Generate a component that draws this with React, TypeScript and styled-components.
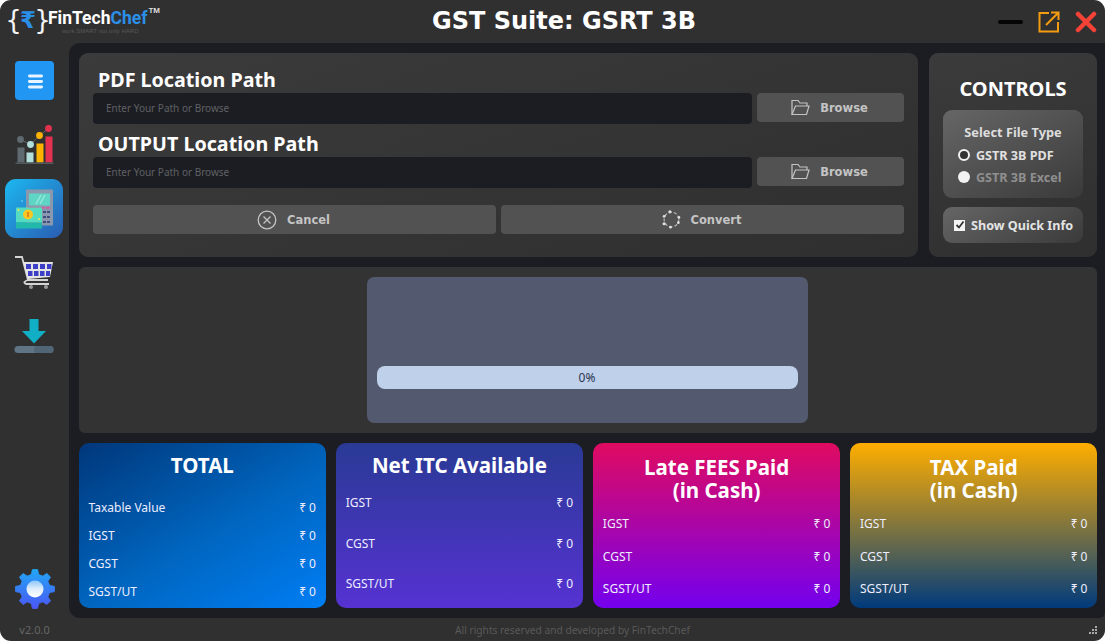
import React from "react";
import styled, { createGlobalStyle } from "styled-components";

const Global = createGlobalStyle`
  html, body { margin: 0; padding: 0; background: #fff; }
  body { font-family: "DejaVu Sans", "Liberation Sans", sans-serif; }
  * { box-sizing: border-box; }
`;

const Window = styled.div`
  width: 1105px; height: 641px; background: #303030; border-radius: 11px;
  display: grid; grid-template-columns: 69px 1fr; grid-template-rows: 43px 575px 23px; overflow: hidden;
`;
const TitleBar = styled.header`
  grid-column: 1 / 3; display: grid; grid-template-columns: 200px 1fr 200px; align-items: center;
`;
const Logo = styled.div`
  display: flex; align-items: flex-start; padding: 7px 0 0 9px; position: relative; height: 43px;
`;
const Brace = styled.span`
  font-family: "DejaVu Sans", sans-serif; font-weight: 400; font-size: 26px; line-height: 26px; color: #f4f4f4; width: 9px; display: flex; justify-content: center;
`;
const Rupee = styled.span`
  font-family: "DejaVu Sans", sans-serif; font-weight: 700; color: #2b8fe8; font-size: 23px; line-height: 26px; width: 20px; display: flex; justify-content: center;
`;
const BrandText = styled.span`
  font-family: "Roboto", sans-serif; font-weight: 700; font-size: 17.5px; line-height: 22px; color: #fff; margin-left: 1px; white-space: nowrap;
  em { font-style: normal; color: #2b8fe8; }
`;
const Tm = styled.span`
  font-family: "Liberation Sans", sans-serif; font-size: 8px; color: #ddd; line-height: 8px; margin-left: 1px; font-weight: 700;
`;
const Tagline = styled.span`
  position: absolute; left: 62px; top: 28px; font-family: "Liberation Sans", sans-serif; font-size: 6px; line-height: 7px; color: #585858; white-space: nowrap;
`;
const AppTitle = styled.h1`
  margin: 0; text-align: center; font-size: 24px; font-weight: 700; color: #fff; line-height: 43px; font-family: "DejaVu Sans", sans-serif; padding-left: 23px; white-space: nowrap;
`;
const WinButtons = styled.div`
  display: flex; align-items: center; justify-content: flex-end; height: 43px; padding: 0 8px 0 0; gap: 15px;
`;
const Minimize = styled.div`
  width: 25px; height: 4px; border-radius: 2px; background: #050505;
`;

const Sidebar = styled.nav`
  display: flex; flex-direction: column; align-items: center; padding: 18px 0 9px;
`;
const MenuButton = styled.button`
  width: 39px; height: 39px; border: 0; border-radius: 4px; background: #2196f3; display: flex; align-items: center; justify-content: center; margin-bottom: 15px; padding: 0;
`;
const NavTile = styled.div<{ $active?: boolean }>`
  width: 58px; height: 59px; border-radius: 11px; display: flex; align-items: center; justify-content: center; margin: 0 0 5px -1px;
  background: ${(p) => (p.$active ? "linear-gradient(135deg, #1cb8f0 0%, #2a5cb2 100%)" : "transparent")};
`;
const GearSlot = styled.div`
  margin-top: auto; width: 40px; height: 40px;
`;

const Main = styled.main`
  background: #1c1d22; border-radius: 11px 0 6px 11px; padding: 10px 8px 10px 10px;
  display: grid; grid-template-rows: 204px 166px 165px; row-gap: 10px;
`;
const TopRow = styled.section`
  display: grid; grid-template-columns: 839px 168px; column-gap: 11px;
`;
const Panel = styled.div`
  background: linear-gradient(160deg, #3b3b3b 0%, #2f2f2f 100%); border-radius: 9px;
`;
const PathPanel = styled(Panel)`
  padding: 14px 14px 0;
`;
const FieldLabel = styled.label`
  display: block; font-size: 19.7px; font-family: "Noto Sans", sans-serif; font-weight: 700; color: #fff; line-height: 26px; height: 26px; padding-left: 5px; white-space: nowrap;
`;
const FieldRow = styled.div`
  display: grid; grid-template-columns: 659px 147px; column-gap: 5px; height: 29px; margin-bottom: 9px;
`;
const PathInput = styled.div`
  background: #1c1d22; border-radius: 4px; color: #5f6064; font-size: 10px; font-family: "Noto Sans", sans-serif; line-height: 31px; padding-left: 13px;
`;
const GreyButton = styled.button`
  background: #525252; border: 0; border-radius: 4px; color: #c4c4c4; display: flex; align-items: center; justify-content: center;
  font-family: "DejaVu Sans", sans-serif; font-weight: 700; font-size: 11.5px; gap: 10px; height: 29px; padding: 0 2px 0 0;
`;
const ActionRow = styled.div`
  display: grid; grid-template-columns: 403px 403px; column-gap: 5px; margin-top: 19px;
`;
const ControlsPanel = styled(Panel)`
  padding: 0 14px; display: flex; flex-direction: column;
`;
const ControlsTitle = styled.h2`
  margin: 0; font-family: "Noto Sans", sans-serif; text-align: center; color: #fff; font-size: 20px; font-weight: 700; line-height: 26px; padding-top: 23px; height: 57px;
`;
const GroupBox = styled.div`
  background: linear-gradient(150deg, #666 0%, #3a3a3a 100%); border-radius: 9px; height: 88px; padding: 14px 0 0 15px; margin-bottom: 9px;
`;
const GroupTitle = styled.div`
  font-size: 12.8px; font-weight: 700; color: #ddd; font-family: "Noto Sans", sans-serif; text-align: center; padding-right: 15px; line-height: 16px; margin-bottom: 4px;
`;
const RadioRow = styled.div<{ $muted?: boolean }>`
  display: flex; align-items: center; gap: 6px; height: 22px; font-size: 12.6px; font-weight: 700; white-space: nowrap;
  color: ${(p) => (p.$muted ? "#8f8f8f" : "#e0e0e0")};
  font-family: "Noto Sans", sans-serif;
`;
const RadioDot = styled.span<{ $on?: boolean }>`
  width: 12px; height: 12px; border-radius: 50%; background: ${(p) => (p.$on ? "#333" : "#f2f2f2")}; border: ${(p) => (p.$on ? "2px solid #f2f2f2" : "0")};
`;
const QuickBox = styled.div`
  height: 36px; border-radius: 9px; background: linear-gradient(150deg, #666 0%, #3a3a3a 100%); display: flex; align-items: center; padding-left: 11px; gap: 6px;
  font-size: 12.6px; font-weight: 700; color: #e4e4e4; font-family: "Noto Sans", sans-serif; white-space: nowrap;
`;
const Check = styled.span`
  width: 11px; height: 11px; background: #f4f4f4; display: flex; align-items: center; justify-content: center;
`;

const ProgressPanel = styled.section`
  background: #333; border-radius: 6px; padding: 10px 2px 10px 0; display: flex; justify-content: center;
`;
const ProgressCard = styled.div`
  width: 441px; height: 146px; background: #53596e; border-radius: 7px; padding: 89px 10px 0;
`;
const ProgressBar = styled.div`
  height: 23px; background: #bed0ea; border-radius: 8px; text-align: center; font-size: 12px; line-height: 24px; color: #2c3650; font-family: "Noto Sans", sans-serif;
`;

const Cards = styled.section`
  display: grid; grid-template-columns: repeat(4, 1fr); column-gap: 10.67px;
`;
const Card = styled.article<{ $bg: string }>`
  background: ${(p) => p.$bg}; border-radius: 10px; padding: 0 9.5px; color: #fff; overflow: hidden;
`;
const CardTitle = styled.h3<{ $top: number }>`
  margin: ${(p) => p.$top}px 0 0; text-align: center; font-family: "Noto Sans", sans-serif; font-weight: 700; font-size: 20.5px; line-height: 23px; color: #fff;
`;
const Rows = styled.div<{ $top: number; $gap: number }>`
  margin-top: ${(p) => p.$top}px; display: flex; flex-direction: column; gap: ${(p) => p.$gap}px;
`;
const Row = styled.div`
  display: flex; justify-content: space-between; font-size: 12px; line-height: 16px; font-family: "Noto Sans", sans-serif; color: #eef;
`;

const Footer = styled.footer`
  grid-column: 1 / 3; display: grid; grid-template-columns: 69px 1fr 30px; align-items: center; font-family: "Noto Sans", sans-serif; font-size: 10.2px; color: #595959;
`;
const Version = styled.span`
  text-align: center; padding-left: 0; color: #666; font-size: 11px;
`;
const Rights = styled.span`
  text-align: center; padding-left: 1px;
`;
const Grip = styled.div`
  justify-self: end; margin-right: 8px; display: grid; grid-template-columns: repeat(3, 2px); grid-auto-rows: 2px; gap: 1px;
  span { background: #aaa; }
  span.x { background: transparent; }
`;

const gearPath = (() => {
  const teeth = 8, ro = 19.5, ri = 15, c = 20;
  const pts: string[] = [];
  for (let i = 0; i < teeth; i++) {
    const a = (i / teeth) * Math.PI * 2 - Math.PI / 2;
    const s = (Math.PI * 2) / teeth;
    [[-0.3, ri], [-0.17, ro], [0.17, ro], [0.3, ri]].forEach(([d, r]) => {
      const t = a + d * s;
      pts.push(`${(c + r * Math.cos(t)).toFixed(2)} ${(c + r * Math.sin(t)).toFixed(2)}`);
    });
  }
  return "M" + pts.join("L") + "Z";
})();

const MenuIcon = () => (
  <svg width="18" height="18" viewBox="0 0 18 18"><g fill="#e8f4ff"><rect x="2" y="2.5" width="15" height="3" rx="1.4" /><rect x="2" y="8" width="15" height="3" rx="1.4" /><rect x="2" y="13.5" width="15" height="3" rx="1.4" /></g></svg>
);
const ChartIcon = () => (
  <svg width="39" height="40" viewBox="0 0 39 40">
    <path d="M5.500 14.500L15.500 19.500L24.500 10.500L33.500 3.500" stroke="#777" strokeWidth="0.7" fill="none" />
    <rect x="2.500" y="22.500" width="7" height="15" fill="#5e6a70" /><circle cx="5.500" cy="14.500" r="3.400" fill="#5e6a70" />
    <rect x="11.500" y="27.500" width="7" height="10" fill="#b2dfdb" /><circle cx="15.500" cy="19.500" r="3.400" fill="#b2dfdb" />
    <rect x="21.500" y="18.500" width="7" height="19" fill="#ffb300" /><circle cx="24.500" cy="10.500" r="3.400" fill="#ffb300" />
    <rect x="30.500" y="11.500" width="7" height="26" fill="#e53150" /><circle cx="33.500" cy="3.500" r="3.400" fill="#e53150" />
    <rect x="0.500" y="37.500" width="38" height="1.500" fill="#53595c" />
  </svg>
);
const CalcIcon = () => (
  <svg width="44" height="44" viewBox="0 0 44 44">
    <rect x="14" y="2.500" width="27" height="36" rx="1" fill="#8b97ad" />
    <rect x="17" y="6.500" width="21" height="12" fill="#5fd6c5" />
    <path d="M24 17l5-9M28 17l5-9" stroke="#9be8dc" strokeWidth="1.400" />
    <g fill="#d85a9c"><rect x="17" y="20" width="4" height="1.600" /><rect x="23" y="20" width="4" height="1.600" /><rect x="29" y="20" width="4" height="1.600" /><rect x="34" y="20" width="4" height="1.600" /></g>
    <g fill="#3f5080"><rect x="31" y="24" width="3" height="2" /><rect x="35" y="24" width="3" height="2" /><rect x="31" y="29" width="3" height="2" /><rect x="35" y="29" width="3" height="2" /><rect x="31" y="34" width="3" height="2" /><rect x="35" y="34" width="3" height="2" /></g>
    <rect x="4" y="20.500" width="26" height="15" fill="#54dcc0" />
    <rect x="4" y="35.500" width="26" height="6" fill="#22b9ac" />
    <circle cx="16" cy="27.500" r="5" fill="#f9c623" /><rect x="15" y="25" width="2" height="5" fill="#e08a12" />
    <circle cx="6.500" cy="23" r="1" fill="#f9e14a" /><circle cx="27" cy="32" r="1" fill="#f9e14a" />
    <circle cx="10" cy="14" r="1" fill="#5fc6ea" />
  </svg>
);
const CartIcon = () => (
  <svg width="40" height="35" viewBox="0 0 40 35">
    <path d="M1 2h7l6 23h20" stroke="#d4d4d4" strokeWidth="1.800" fill="none" />
    <path d="M9 7h30l-3 15-22 2z" fill="#e4e4e4" />
    <g fill="#3d3ec6">
      <rect x="12" y="9" width="5" height="5" /><rect x="19" y="9" width="5" height="5" /><rect x="26" y="9" width="5" height="5" /><rect x="33" y="9" width="4.500" height="5" />
      <rect x="14" y="16" width="4.500" height="5" /><rect x="20" y="16" width="4.500" height="5" /><rect x="26" y="16" width="4.500" height="5" /><rect x="32" y="16" width="4" height="5" />
    </g>
    <path d="M14 25 Q8 27 12 29 H35" stroke="#d4d4d4" strokeWidth="1.800" fill="none" />
    <circle cx="17" cy="32" r="2" fill="#999" /><circle cx="32" cy="32" r="2" fill="#999" />
  </svg>
);
const DownloadIcon = () => (
  <svg width="40" height="36" viewBox="0 0 40 36">
    <path d="M15.500 0h9v12h7.500L20 24.500 8 12h7.500z" fill="#10afc6" />
    <rect x="0.500" y="27" width="39" height="7" rx="3.500" fill="#5f7585" />
    <rect x="20" y="27" width="19.500" height="7" rx="3" fill="#506676" />
  </svg>
);
const GearIcon = () => (
  <svg width="40" height="40" viewBox="0 0 40 40">
    <defs>
      <linearGradient id="g1" x1="0" y1="0" x2="0" y2="1"><stop offset="0" stopColor="#22a6f5" /><stop offset="1" stopColor="#4a57f5" /></linearGradient>
      <linearGradient id="g2" x1="0" y1="0" x2="0" y2="1"><stop offset="0" stopColor="#8cc6fa" /><stop offset="0.500" stopColor="#e0eefc" /><stop offset="1" stopColor="#ffffff" /></linearGradient>
    </defs>
    <path fill="url(#g1)" d={gearPath} strokeLinejoin="round" stroke="url(#g1)" strokeWidth="1" />
    <circle cx="20" cy="20" r="8.500" fill="url(#g2)" />
  </svg>
);
const ExternalIcon = () => (
  <svg width="22" height="22" viewBox="0 0 22 22" fill="none" stroke="#f39c12" strokeWidth="2"><path d="M11 2H1.500v18.500H20V11" /><path d="M8 14L20 2M13 1.500h7.500V9" /></svg>
);
const CloseIcon = () => (
  <svg width="22" height="22" viewBox="0 0 22 22" stroke="#f44336" strokeWidth="4.500" strokeLinecap="round"><path d="M3 3l16 16M19 3L3 19" /></svg>
);
const FolderIcon = () => (
  <svg width="19" height="17" viewBox="0 0 19 17" fill="none" stroke="#c4c4c4" strokeWidth="1.200"><path d="M1 15.500V1.500h6l2 2.500h7v3" /><path d="M1 15.500h14.500L18 7H4.500z" /></svg>
);
const CancelIcon = () => (
  <svg width="20" height="20" viewBox="0 0 20 20" fill="none" stroke="#c4c4c4" strokeWidth="1.300"><circle cx="10" cy="10" r="8.800" /><path d="M6.500 6.500l7 7M13.500 6.500l-7 7" /></svg>
);
const ConvertIcon = () => (
  <svg width="19" height="19" viewBox="0 0 18 18" fill="none"><circle cx="9" cy="9" r="7" stroke="#c4c4c4" strokeWidth="1" strokeDasharray="3 2" /><g fill="#e0e0e0"><circle cx="7.500" cy="1.700" r="1.500" /><circle cx="16" cy="7" r="1.300" /><circle cx="15.500" cy="12" r="1.300" /><circle cx="8" cy="16.300" r="1.300" /><circle cx="2" cy="13" r="1.500" /><circle cx="2" cy="6" r="1.300" /></g></svg>
);
const CheckMark = () => (
  <svg width="10" height="10" viewBox="0 0 10 10" fill="none" stroke="#333" strokeWidth="1.800"><path d="M1.500 5l2.500 2.500L8.500 1.500" /></svg>
);

const cards = [
  { title: ["TOTAL"], bg: "linear-gradient(150deg, #00377a 0%, #0066c0 55%, #007ef5 100%)", titleTop: 11, rowsTop: 23, gap: 12, rows: ["Taxable Value", "IGST", "CGST", "SGST/UT"] },
  { title: ["Net ITC Available"], bg: "linear-gradient(180deg, #293a95 0%, #5632d2 100%)", titleTop: 11, rowsTop: 18, gap: 24.5, rows: ["IGST", "CGST", "SGST/UT"] },
  { title: ["Late FEES Paid", "(in Cash)"], bg: "linear-gradient(180deg, #e00b60 0%, #7400ee 100%)", titleTop: 13, rowsTop: 14, gap: 16.5, rows: ["IGST", "CGST", "SGST/UT"] },
  { title: ["TAX Paid", "(in Cash)"], bg: "linear-gradient(180deg, #ffae00 0%, #4f5f56 70%, #003a7c 100%)", titleTop: 13, rowsTop: 14, gap: 16.5, rows: ["IGST", "CGST", "SGST/UT"] },
];

export default function App() {
  return (
    <>
      <Global />
      <Window>
        <TitleBar>
          <Logo>
            <Brace>{"{"}</Brace>
            <Rupee>₹</Rupee>
            <Brace>{"}"}</Brace>
            <BrandText>FinTech<em>Chef</em></BrandText>
            <Tm>TM</Tm>
            <Tagline>work SMART not only HARD</Tagline>
          </Logo>
          <AppTitle>GST Suite: GSRT 3B</AppTitle>
          <WinButtons>
            <Minimize />
            <ExternalIcon />
            <CloseIcon />
          </WinButtons>
        </TitleBar>
        <Sidebar>
          <MenuButton><MenuIcon /></MenuButton>
          <NavTile><ChartIcon /></NavTile>
          <NavTile $active><CalcIcon /></NavTile>
          <NavTile><CartIcon /></NavTile>
          <NavTile><DownloadIcon /></NavTile>
          <GearSlot><GearIcon /></GearSlot>
        </Sidebar>
        <Main>
          <TopRow>
            <PathPanel>
              <FieldLabel>PDF Location Path</FieldLabel>
              <FieldRow>
                <PathInput>Enter Your Path or Browse</PathInput>
                <GreyButton><FolderIcon />Browse</GreyButton>
              </FieldRow>
              <FieldLabel>OUTPUT Location Path</FieldLabel>
              <FieldRow>
                <PathInput>Enter Your Path or Browse</PathInput>
                <GreyButton><FolderIcon />Browse</GreyButton>
              </FieldRow>
              <ActionRow>
                <GreyButton><CancelIcon />Cancel</GreyButton>
                <GreyButton><ConvertIcon />Convert</GreyButton>
              </ActionRow>
            </PathPanel>
            <ControlsPanel>
              <ControlsTitle>CONTROLS</ControlsTitle>
              <GroupBox>
                <GroupTitle>Select File Type</GroupTitle>
                <RadioRow><RadioDot $on />GSTR 3B PDF</RadioRow>
                <RadioRow $muted><RadioDot />GSTR 3B Excel</RadioRow>
              </GroupBox>
              <QuickBox><Check><CheckMark /></Check>Show Quick Info</QuickBox>
            </ControlsPanel>
          </TopRow>
          <ProgressPanel>
            <ProgressCard>
              <ProgressBar>0%</ProgressBar>
            </ProgressCard>
          </ProgressPanel>
          <Cards>
            {cards.map((c) => (
              <Card key={c.title[0]} $bg={c.bg}>
                <CardTitle $top={c.titleTop}>
                  {c.title.map((t) => <div key={t}>{t}</div>)}
                </CardTitle>
                <Rows $top={c.rowsTop} $gap={c.gap}>
                  {c.rows.map((r) => (
                    <Row key={r}><span>{r}</span><span>₹ 0</span></Row>
                  ))}
                </Rows>
              </Card>
            ))}
          </Cards>
        </Main>
        <Footer>
          <Version>v2.0.0</Version>
          <Rights>All rights reserved and developed by FinTechChef</Rights>
          <Grip>
            <span className="x" /><span className="x" /><span />
            <span className="x" /><span /><span />
            <span /><span /><span />
          </Grip>
        </Footer>
      </Window>
    </>
  );
}
